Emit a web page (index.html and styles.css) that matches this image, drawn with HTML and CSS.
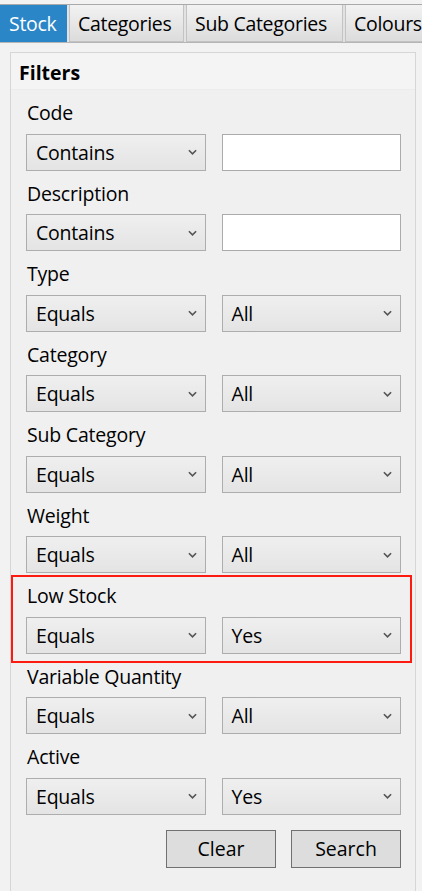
FILE: index.html
```html
<!DOCTYPE html>
<html>
<head>
<meta charset="utf-8">
<link rel="stylesheet" href="styles.css">
</head>
<body>
<div class="tabs">
  <div class="tab active w1">Stock</div>
  <div class="tab w2">Categories</div>
  <div class="tab w3">Sub Categories</div>
  <div class="tab w4">Colours</div>
</div>
<div class="panel">
  <div class="panel-title">Filters</div>
  <div class="panel-body">
    <div class="group">
      <div class="label">Code</div>
      <div class="row">
        <div class="select">Contains<svg class="chev" viewBox="0 0 10 6"><path d="M1 1l4 4 4-4"/></svg></div>
        <div class="input"></div>
      </div>
    </div>
    <div class="group">
      <div class="label">Description</div>
      <div class="row">
        <div class="select">Contains<svg class="chev" viewBox="0 0 10 6"><path d="M1 1l4 4 4-4"/></svg></div>
        <div class="input"></div>
      </div>
    </div>
    <div class="group">
      <div class="label">Type</div>
      <div class="row">
        <div class="select">Equals<svg class="chev" viewBox="0 0 10 6"><path d="M1 1l4 4 4-4"/></svg></div>
        <div class="select">All<svg class="chev" viewBox="0 0 10 6"><path d="M1 1l4 4 4-4"/></svg></div>
      </div>
    </div>
    <div class="group">
      <div class="label">Category</div>
      <div class="row">
        <div class="select">Equals<svg class="chev" viewBox="0 0 10 6"><path d="M1 1l4 4 4-4"/></svg></div>
        <div class="select">All<svg class="chev" viewBox="0 0 10 6"><path d="M1 1l4 4 4-4"/></svg></div>
      </div>
    </div>
    <div class="group">
      <div class="label">Sub Category</div>
      <div class="row">
        <div class="select">Equals<svg class="chev" viewBox="0 0 10 6"><path d="M1 1l4 4 4-4"/></svg></div>
        <div class="select">All<svg class="chev" viewBox="0 0 10 6"><path d="M1 1l4 4 4-4"/></svg></div>
      </div>
    </div>
    <div class="group">
      <div class="label">Weight</div>
      <div class="row">
        <div class="select">Equals<svg class="chev" viewBox="0 0 10 6"><path d="M1 1l4 4 4-4"/></svg></div>
        <div class="select">All<svg class="chev" viewBox="0 0 10 6"><path d="M1 1l4 4 4-4"/></svg></div>
      </div>
    </div>
    <div class="group highlight">
      <div class="label">Low Stock</div>
      <div class="row">
        <div class="select">Equals<svg class="chev" viewBox="0 0 10 6"><path d="M1 1l4 4 4-4"/></svg></div>
        <div class="select">Yes<svg class="chev" viewBox="0 0 10 6"><path d="M1 1l4 4 4-4"/></svg></div>
      </div>
    </div>
    <div class="group">
      <div class="label">Variable Quantity</div>
      <div class="row">
        <div class="select">Equals<svg class="chev" viewBox="0 0 10 6"><path d="M1 1l4 4 4-4"/></svg></div>
        <div class="select">All<svg class="chev" viewBox="0 0 10 6"><path d="M1 1l4 4 4-4"/></svg></div>
      </div>
    </div>
    <div class="group">
      <div class="label">Active</div>
      <div class="row">
        <div class="select">Equals<svg class="chev" viewBox="0 0 10 6"><path d="M1 1l4 4 4-4"/></svg></div>
        <div class="select">Yes<svg class="chev" viewBox="0 0 10 6"><path d="M1 1l4 4 4-4"/></svg></div>
      </div>
    </div>
    <div class="buttons">
      <div class="btn">Clear</div>
      <div class="btn">Search</div>
    </div>
  </div>
</div>
</body>
</html>
```
FILE: styles.css
```css
html, body {
  margin: 0;
  padding: 0;
  background: #f2f2f2;
  font-family: "Open Sans", "Noto Sans", "Liberation Sans", sans-serif;
  font-size: 19.5px;
  color: #000;
  overflow: hidden;
  height: 891px;
}
.tabs {
  margin-top: 4px;
  border-top: 1px solid #a9a9a9;
  border-bottom: 1px solid #b5b5b5;
  display: flex;
  gap: 2px;
  height: 37px;
  background: #e2e2e2;
  overflow: hidden;
}
.tab {
  box-sizing: border-box;
  flex: none;
  height: 37px;
  padding-left: 8px;
  display: flex;
  align-items: center;
  border: 1px solid #c3c3c3;
  border-top: none;
  background: linear-gradient(#f2f2f2, #dcdcdc);
  white-space: nowrap;
  letter-spacing: -0.3px;
}
.tab.active {
  background: #2b86c8;
  border-color: #2b86c8;
  color: #fff;
}
.w1 { width: 67px; }
.w2 { width: 115px; }
.w3 { width: 157px; }
.w4 { width: 90px; }
.panel {
  margin: 9px 6px 0 10px;
  border: 1px solid #d6d6d6;
  background: #f0f0f0;
  height: 840px;
}
.panel-title {
  height: 33px;
  padding-left: 8px;
  padding-top: 3px;
  display: flex;
  align-items: center;
  font-weight: bold;
  background: #f4f4f4;
  border-bottom: 1px solid #ececec;
}
.panel-body {
  padding: 0 14px 0 15px;
}
.group {
  display: flex;
  flex-direction: column;
}
.label {
  height: 43.5px;
  box-sizing: border-box;
  padding-top: 2px;
  padding-left: 1px;
  display: flex;
  align-items: center;
  letter-spacing: -0.2px;
}
.row {
  display: flex;
  gap: 16px;
}
.select, .input {
  box-sizing: border-box;
  width: 180px;
  height: 37px;
}
.select {
  border: 1px solid #adadad;
  background: linear-gradient(#efefef, #e4e4e4);
  display: flex;
  align-items: center;
  padding-left: 9px;
  padding-right: 8px;
  letter-spacing: -0.2px;
}
.chev {
  margin-left: auto;
  width: 9px;
  height: 6px;
  fill: none;
  stroke: #555;
  stroke-width: 1.8;
}
.input {
  border: 1px solid #ababab;
  background: #fff;
}
.highlight {
  position: relative;
}
.highlight::after {
  content: "";
  position: absolute;
  top: 2px;
  left: -15px;
  right: -11px;
  bottom: -9px;
  border: 2px solid #ff1a10;
}
.buttons {
  display: flex;
  justify-content: flex-end;
  gap: 15px;
  margin-top: 15px;
}
.btn {
  box-sizing: border-box;
  width: 110px;
  height: 38px;
  border: 1px solid #707070;
  background: #dddddd;
  display: flex;
  align-items: center;
  justify-content: center;
}
```
